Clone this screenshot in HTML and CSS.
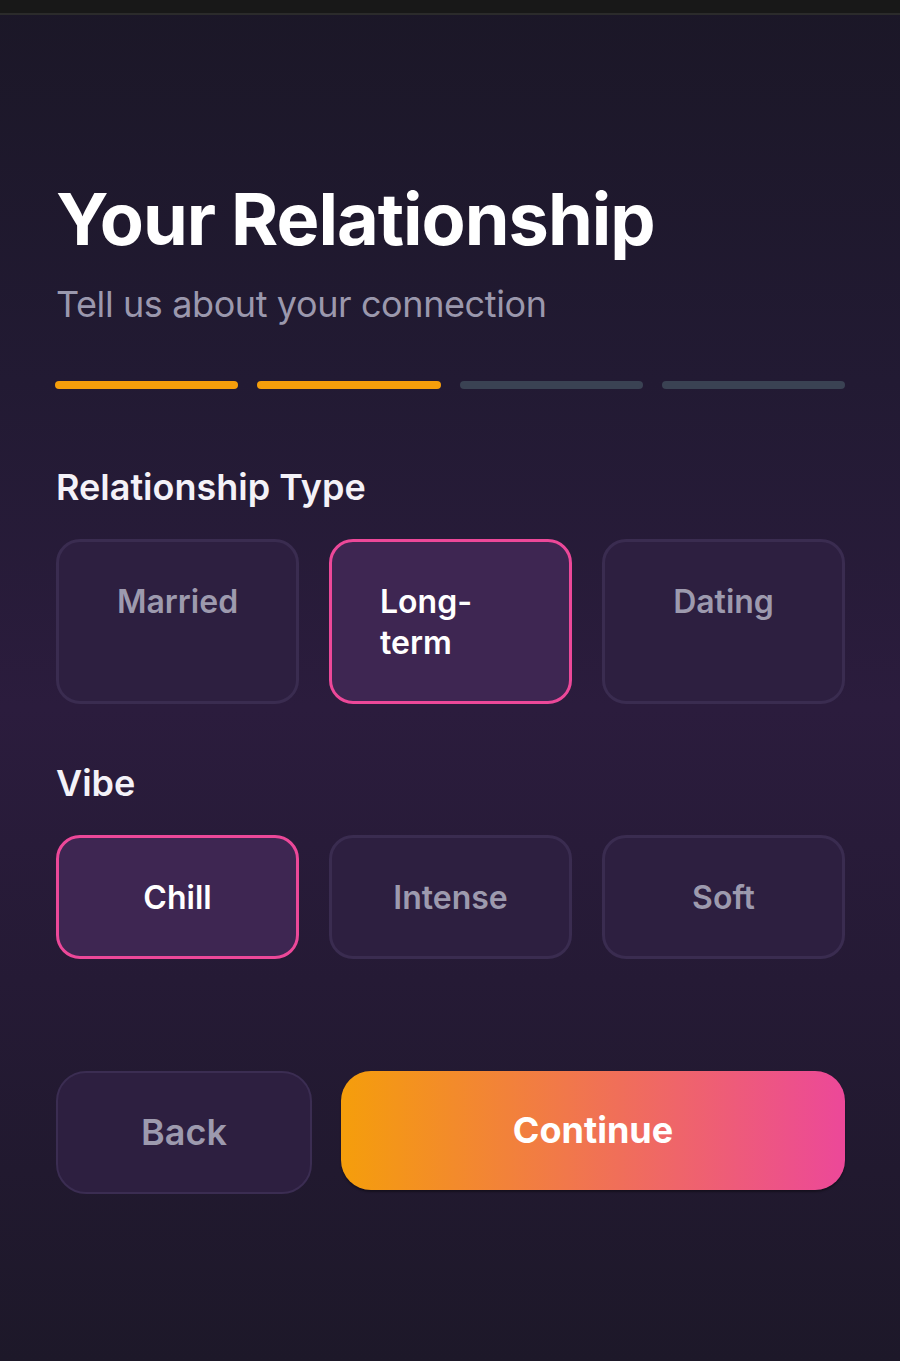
FILE: index.html
```html
<!DOCTYPE html>
<html lang="en">
<head>
  <meta charset="UTF-8" />
  <meta name="viewport" content="width=device-width, initial-scale=1.0"/>
  <title>Your Relationship</title>
  <link rel="stylesheet" href="styles.css">
</head>
<body>
  <div class="top-bar"></div>

  <main class="screen">
    <h1 class="title">Your Relationship</h1>
    <p class="subtitle">Tell us about your connection</p>

    <div class="progress">
      <span class="step done"></span>
      <span class="step done"></span>
      <span class="step"></span>
      <span class="step"></span>
    </div>

    <h2 class="section-label first">Relationship Type</h2>
    <div class="options">
      <button class="option">Married</button>
      <button class="option selected">Long-term</button>
      <button class="option">Dating</button>
    </div>

    <h2 class="section-label">Vibe</h2>
    <div class="options">
      <button class="option selected">Chill</button>
      <button class="option">Intense</button>
      <button class="option">Soft</button>
    </div>

    <div class="actions">
      <button class="btn-back">Back</button>
      <button class="btn-continue">Continue</button>
    </div>
  </main>
</body>
</html>
```

FILE: styles.css
```css
body {
  margin: 0;
  min-height: 1361px;
  font-family: Inter, 'Noto Sans', sans-serif;
  background: linear-gradient(180deg, #1b1727 0%, #221a33 28%, #2b1c3d 52%, #251a35 72%, #1d1829 100%);
  color: #ffffff;
}
.top-bar {
  height: 13px;
  background: #181818;
  border-bottom: 2px solid #2b2b2b;
}
.screen {
  padding: 161px 55px 0 56px;
}
.title {
  margin: 0;
  font-size: 72px;
  line-height: 86px;
  font-weight: 700;
  letter-spacing: -1px;
}
.subtitle {
  margin: 20px 0 0;
  font-size: 36px;
  line-height: 44px;
  font-weight: 400;
  letter-spacing: -0.4px;
  color: #9b98ad;
}
.progress {
  display: grid;
  grid-template-columns: repeat(4, 1fr);
  gap: 19px;
  margin-top: 55px;
  margin-left: -1px;
}
.step {
  height: 8px;
  border-radius: 4px;
  background: #3a4253;
}
.step.done {
  background: #f59e0b;
}
.section-label {
  margin: 58px 0 30px;
  font-size: 36px;
  line-height: 43px;
  font-weight: 600;
  color: #f4f2f8;
}
.section-label.first {
  margin-top: 77px;
}
.options {
  display: grid;
  grid-template-columns: repeat(3, 1fr);
  gap: 30px;
}
.option {
  display: flex;
  justify-content: center;
  align-items: flex-start;
  padding: 39px 48px 38px;
  border: 3px solid #3a2c50;
  border-radius: 24px;
  background: #2d1f40;
  font-family: inherit;
  font-size: 32px;
  line-height: 41px;
  font-weight: 600;
  color: #9d9aae;
  text-align: left;
  cursor: pointer;
}
.option.selected {
  border-color: #ec4899;
  background: #3e2652;
  color: #ffffff;
}
.actions {
  display: flex;
  align-items: flex-start;
  gap: 29px;
  margin-top: 112px;
}
.btn-back, .btn-continue {
  font-family: inherit;
  font-size: 36px;
  line-height: 43px;
  padding: 38px 0;
  border-radius: 30px;
  cursor: pointer;
}
.btn-back {
  flex: 1;
  border: 2px solid #3b2d52;
  background: #2d1f40;
  color: #9d9aae;
  font-weight: 600;
}
.btn-continue {
  flex: 2;
  border: none;
  background: linear-gradient(90deg, #f59e0b, #ec4899);
  color: #ffffff;
  font-weight: 700;
  box-shadow: 0 2px 2px rgba(0, 0, 0, 0.35);
}
```
